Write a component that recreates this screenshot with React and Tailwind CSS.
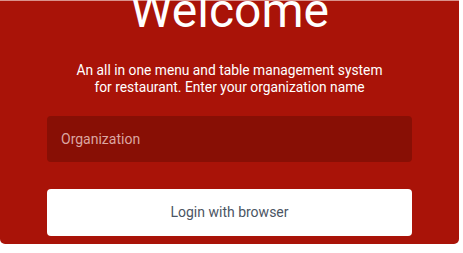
import React from 'react';

const App = () => {
  return (
    <div className="w-[463px] h-[253px] bg-white overflow-hidden font-['Roboto','Liberation_Sans',sans-serif]">
      <div className="w-[459px] h-[244px] bg-[#a91308] border-t border-[#d9928c] rounded-b-[5px] px-[47px] flex flex-col items-center">
        <h1 className="-mt-[14px] text-[48px] leading-[48px] font-normal text-white">Welcome</h1>
        <p className="mt-[27px] text-[13.8px] leading-[16.5px] text-white text-center">
          An all in one menu and table management system
          <br />
          for restaurant. Enter your organization name
        </p>
        <input
          type="text"
          placeholder="Organization"
          className="mt-[21px] w-full h-[46px] rounded-[4px] bg-[#880f05] px-[14px] text-[14px] text-white placeholder:text-[#dba6a1] outline-none"
        />
        <button className="mt-[27px] w-full h-[47px] rounded-[4px] bg-white text-[14px] text-[#4b5563]">
          Login with browser
        </button>
      </div>
    </div>
  );
};

export default App;
